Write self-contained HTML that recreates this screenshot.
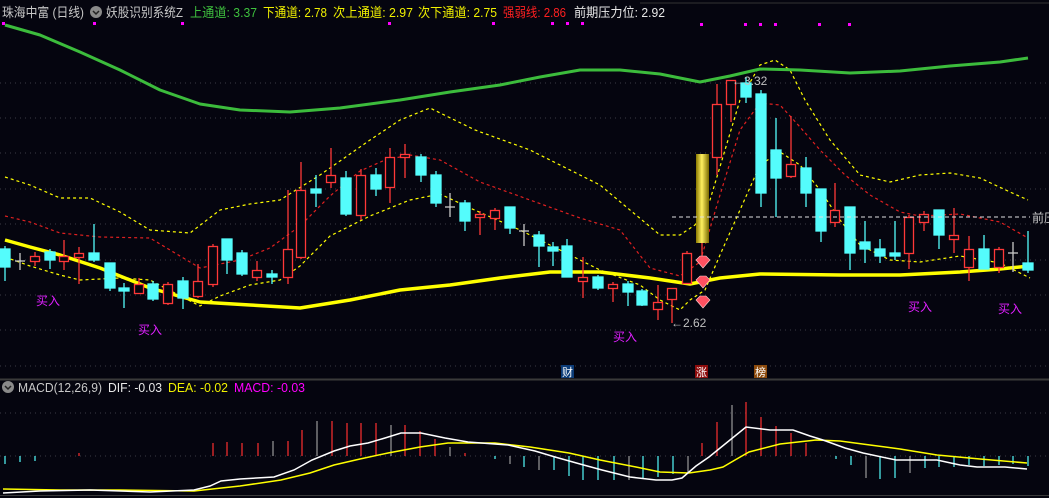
<!DOCTYPE html>
<html><head><meta charset="utf-8"><style>
html,body{margin:0;padding:0;background:#05050f;}
body{width:1049px;height:498px;overflow:hidden;position:relative;font-family:"Liberation Sans","Noto Sans CJK SC",sans-serif;}
svg{position:absolute;left:0;top:0;}
</style></head><body>
<svg width="1049" height="498" viewBox="0 0 1049 498" xmlns="http://www.w3.org/2000/svg" font-family="Liberation Sans, Noto Sans CJK SC, sans-serif">
<rect width="1049" height="498" fill="#05050f"/>
<line x1="640" y1="3" x2="1049" y2="3" stroke="#333" stroke-width="1"/>
<!-- grid -->
<g stroke="#3a3a44" stroke-width="1" stroke-dasharray="1,4">
<line x1="0" y1="83" x2="1049" y2="83"/><line x1="0" y1="118" x2="1049" y2="118"/><line x1="0" y1="153" x2="1049" y2="153"/><line x1="0" y1="189" x2="1049" y2="189"/><line x1="0" y1="224" x2="1049" y2="224"/><line x1="0" y1="260" x2="1049" y2="260"/><line x1="0" y1="295" x2="1049" y2="295"/><line x1="0" y1="330" x2="1049" y2="330"/><line x1="0" y1="366" x2="1049" y2="366"/>
<line x1="0" y1="413" x2="1049" y2="413"/><line x1="0" y1="456" x2="1049" y2="456"/>
</g>
<line x1="0" y1="379.5" x2="1049" y2="379.5" stroke="#3a3a3a" stroke-width="2"/>
<line x1="0" y1="495.5" x2="1049" y2="495.5" stroke="#3a3a3a" stroke-width="1"/>
<!-- header -->
<g font-size="13" lengthAdjust="spacingAndGlyphs">
<text x="2" y="17" fill="#c8c8c8" textLength="82" lengthAdjust="spacingAndGlyphs">珠海中富 (日线)</text>
<text x="106" y="17" fill="#c8c8c8" textLength="77" lengthAdjust="spacingAndGlyphs">妖股识别系统Z</text>
<text x="190" y="17" fill="#3ec03e" textLength="67" lengthAdjust="spacingAndGlyphs">上通道: 3.37</text>
<text x="263" y="17" fill="#f0f000" textLength="64" lengthAdjust="spacingAndGlyphs">下通道: 2.78</text>
<text x="333" y="17" fill="#f0f000" textLength="80" lengthAdjust="spacingAndGlyphs">次上通道: 2.97</text>
<text x="418" y="17" fill="#f0f000" textLength="79" lengthAdjust="spacingAndGlyphs">次下通道: 2.75</text>
<text x="503" y="17" fill="#ff2020" textLength="63" lengthAdjust="spacingAndGlyphs">强弱线: 2.86</text>
<text x="574" y="17" fill="#e8e8e8" textLength="91" lengthAdjust="spacingAndGlyphs">前期压力位: 2.92</text>
</g>
<circle cx="96" cy="12" r="6" fill="#8a8a8a"/><path d="M93 11 L96 14 L99 11" stroke="#222" stroke-width="1.5" fill="none"/>
<g fill="#ff00ff">
<rect x="2" y="22" width="3" height="3"/><rect x="93" y="22" width="3" height="3"/><rect x="181" y="22" width="3" height="3"/><rect x="388" y="22" width="3" height="3"/><rect x="492" y="22" width="3" height="3"/><rect x="551" y="22" width="3" height="3"/><rect x="566" y="22" width="3" height="3"/><rect x="581" y="22" width="3" height="3"/>
<rect x="700" y="23" width="3" height="3"/><rect x="744" y="23" width="3" height="3"/><rect x="759" y="23" width="3" height="3"/><rect x="774" y="23" width="3" height="3"/><rect x="818" y="23" width="3" height="3"/><rect x="848" y="23" width="3" height="3"/>
</g>
<!-- bands -->
<polyline fill="none" stroke="#ffff00" stroke-width="1.2" stroke-dasharray="3,3" points="5,177 30,185 60,198 90,198 120,212 150,230 190,233 220,210 250,204 280,200 320,175 370,140 400,120 430,108 475,130 530,150 600,185 660,235 680,235 695,225 710,200 725,150 740,100 760,65 775,60 790,70 805,100 830,140 860,175 890,182 920,175 950,173 980,178 1010,192 1028,200"/>
<polyline fill="none" stroke="#e02020" stroke-width="1.2" stroke-dasharray="3,3" points="5,216 30,222 60,233 100,237 150,238 170,250 200,268 240,260 270,248 300,226 330,196 360,171 385,160 410,155 440,160 480,182 530,200 580,218 620,230 650,268 680,276 700,262 720,195 740,130 760,103 780,105 800,127 820,150 845,175 870,195 900,212 920,216 960,214 1000,222 1028,238"/>
<polyline fill="none" stroke="#ffff00" stroke-width="1.2" stroke-dasharray="3,3" points="5,257 30,266 60,275 80,280 120,278 150,280 165,288 200,306 220,296 250,285 280,280 300,266 330,236 370,216 410,200 440,194 470,208 520,230 560,250 600,270 640,285 660,300 680,310 690,300 705,290 720,255 740,210 760,165 780,152 800,165 820,190 840,220 860,245 890,260 920,262 960,256 1000,263 1030,278"/>
<polyline fill="none" stroke="#3cbc3c" stroke-width="3" stroke-linejoin="round" points="5,25 40,35 80,52 120,70 160,90 200,104 240,110 290,112 340,108 400,100 450,92 500,85 540,77 580,70 620,70 660,74 700,82 730,76 760,69 800,70 850,73 900,71 950,66 1000,62 1028,58"/>
<polyline fill="none" stroke="#ffff00" stroke-width="3.5" stroke-linejoin="round" points="5,240 30,247 60,255 100,268 150,288 200,302 250,305 300,308 350,300 400,290 450,285 500,278 550,272 600,272 650,278 690,284 720,278 760,274 840,275 900,275 960,272 1000,269 1030,266"/>
<!-- candles -->
<g stroke-width="1.3">
<g stroke="#54fcfc" fill="#54fcfc">
<line x1="5" y1="246" x2="5" y2="281"/><rect x="0" y="249" width="10" height="18"/>
<line x1="50" y1="249" x2="50" y2="269"/><rect x="45" y="252" width="10" height="8"/>
<line x1="94" y1="224" x2="94" y2="262"/><rect x="89" y="253" width="10" height="7"/>
<line x1="110" y1="263" x2="110" y2="291"/><rect x="105" y="263" width="10" height="25"/>
<line x1="124" y1="283" x2="124" y2="308"/><rect x="119" y="288" width="10" height="3"/>
<line x1="153" y1="281" x2="153" y2="301"/><rect x="148" y="284" width="10" height="15"/>
<line x1="183" y1="277" x2="183" y2="309"/><rect x="178" y="281" width="10" height="17"/>
<line x1="227" y1="239" x2="227" y2="274"/><rect x="222" y="239" width="10" height="21"/>
<line x1="242" y1="250" x2="242" y2="276"/><rect x="237" y="253" width="10" height="21"/>
<line x1="272" y1="270" x2="272" y2="284"/><rect x="267" y="274" width="10" height="3"/>
<line x1="316" y1="175" x2="316" y2="207"/><rect x="311" y="189" width="10" height="4"/>
<line x1="346" y1="171" x2="346" y2="216"/><rect x="341" y="178" width="10" height="36"/>
<line x1="376" y1="168" x2="376" y2="196"/><rect x="371" y="175" width="10" height="14"/>
<line x1="421" y1="154" x2="421" y2="182"/><rect x="416" y="157" width="10" height="18"/>
<line x1="436" y1="171" x2="436" y2="207"/><rect x="431" y="175" width="10" height="28"/>
<line x1="465" y1="200" x2="465" y2="231"/><rect x="460" y="203" width="10" height="18"/>
<line x1="510" y1="207" x2="510" y2="234"/><rect x="505" y="207" width="10" height="21"/>
<line x1="539" y1="231" x2="539" y2="267"/><rect x="534" y="235" width="10" height="11"/>
<line x1="553" y1="242" x2="553" y2="266"/><rect x="548" y="247" width="10" height="4"/>
<line x1="567" y1="239" x2="567" y2="277"/><rect x="562" y="246" width="10" height="31"/>
<line x1="598" y1="275" x2="598" y2="290"/><rect x="593" y="277" width="10" height="11"/>
<line x1="628" y1="281" x2="628" y2="306"/><rect x="623" y="284" width="10" height="8"/>
<line x1="642" y1="289" x2="642" y2="306"/><rect x="637" y="291" width="10" height="14"/>
<line x1="746" y1="77" x2="746" y2="103"/><rect x="741" y="83" width="10" height="14"/>
<line x1="761" y1="90" x2="761" y2="207"/><rect x="756" y="94" width="10" height="99"/>
<line x1="776" y1="118" x2="776" y2="217"/><rect x="771" y="150" width="10" height="28"/>
<line x1="806" y1="157" x2="806" y2="207"/><rect x="801" y="168" width="10" height="25"/>
<line x1="821" y1="189" x2="821" y2="242"/><rect x="816" y="189" width="10" height="42"/>
<line x1="850" y1="207" x2="850" y2="270"/><rect x="845" y="207" width="10" height="46"/>
<line x1="865" y1="221" x2="865" y2="263"/><rect x="860" y="242" width="10" height="7"/>
<line x1="880" y1="239" x2="880" y2="263"/><rect x="875" y="249" width="10" height="7"/>
<line x1="895" y1="221" x2="895" y2="260"/><rect x="890" y="253" width="10" height="3"/>
<line x1="939" y1="210" x2="939" y2="249"/><rect x="934" y="210" width="10" height="25"/>
<line x1="984" y1="235" x2="984" y2="269"/><rect x="979" y="249" width="10" height="20"/>
<line x1="1028" y1="231" x2="1028" y2="273"/><rect x="1023" y="263" width="10" height="7"/>
</g>
<g stroke="#ff3838" fill="#05050f">
<line x1="35" y1="252" x2="35" y2="266"/><rect x="30.5" y="256.5" width="9" height="5"/>
<line x1="64" y1="240" x2="64" y2="270"/><rect x="59.5" y="256.5" width="9" height="5"/>
<line x1="79" y1="247" x2="79" y2="284"/><rect x="74.5" y="253.5" width="9" height="4"/>
<line x1="139" y1="278" x2="139" y2="294"/><rect x="134.5" y="284.5" width="9" height="9"/>
<line x1="168" y1="282" x2="168" y2="305"/><rect x="163.5" y="284.5" width="9" height="19"/>
<line x1="198" y1="264" x2="198" y2="298"/><rect x="193.5" y="281.5" width="9" height="15"/>
<line x1="213" y1="244" x2="213" y2="287"/><rect x="208.5" y="246.5" width="9" height="38"/>
<line x1="257" y1="261" x2="257" y2="281"/><rect x="252.5" y="270.5" width="9" height="7"/>
<line x1="288" y1="190" x2="288" y2="284"/><rect x="283.5" y="249.5" width="9" height="28"/>
<line x1="301" y1="162" x2="301" y2="259"/><rect x="296.5" y="190.5" width="9" height="67"/>
<line x1="331" y1="148" x2="331" y2="188"/><rect x="326.5" y="175.5" width="9" height="7"/>
<line x1="361" y1="169" x2="361" y2="220"/><rect x="356.5" y="175.5" width="9" height="40"/>
<line x1="390" y1="148" x2="390" y2="203"/><rect x="385.5" y="157.5" width="9" height="30"/>
<line x1="405" y1="144" x2="405" y2="178"/><rect x="400.5" y="154.5" width="9" height="3"/>
<line x1="480" y1="211" x2="480" y2="235"/><rect x="475.5" y="214.5" width="9" height="3"/>
<line x1="495" y1="208" x2="495" y2="230"/><rect x="490.5" y="210.5" width="9" height="8"/>
<line x1="583" y1="257" x2="583" y2="298"/><rect x="578.5" y="277.5" width="9" height="4"/>
<line x1="613" y1="282" x2="613" y2="302"/><rect x="608.5" y="284.5" width="9" height="4"/>
<line x1="658" y1="285" x2="658" y2="320"/><rect x="653.5" y="302.5" width="9" height="7"/>
<line x1="672" y1="288" x2="672" y2="323"/><rect x="667.5" y="288.5" width="9" height="11"/>
<line x1="687" y1="251" x2="687" y2="283"/><rect x="682.5" y="253.5" width="9" height="30"/>
<line x1="702" y1="243" x2="702" y2="260"/>
<line x1="717" y1="84" x2="717" y2="175"/><rect x="712.5" y="104.5" width="9" height="53"/>
<line x1="731" y1="80" x2="731" y2="122"/><rect x="726.5" y="80.5" width="9" height="24"/>
<line x1="791" y1="116" x2="791" y2="178"/><rect x="786.5" y="164.5" width="9" height="12"/>
<line x1="835" y1="183" x2="835" y2="227"/><rect x="830.5" y="210.5" width="9" height="12"/>
<line x1="909" y1="215" x2="909" y2="269"/><rect x="904.5" y="217.5" width="9" height="36"/>
<line x1="924" y1="211" x2="924" y2="231"/><rect x="919.5" y="214.5" width="9" height="8"/>
<line x1="954" y1="208" x2="954" y2="253"/><rect x="949.5" y="235.5" width="9" height="4"/>
<line x1="969" y1="236" x2="969" y2="281"/><rect x="964.5" y="249.5" width="9" height="18"/>
<line x1="999" y1="247" x2="999" y2="273"/><rect x="994.5" y="249.5" width="9" height="18"/>
</g>
<g stroke="#c8c8c8">
<line x1="20" y1="253" x2="20" y2="270"/><line x1="15" y1="261" x2="25" y2="261"/>
<line x1="450" y1="193" x2="450" y2="217"/><line x1="445" y1="207" x2="455" y2="207"/>
<line x1="524" y1="224" x2="524" y2="246"/><line x1="519" y1="231" x2="529" y2="231"/>
<line x1="1013" y1="242" x2="1013" y2="272"/><line x1="1008" y1="253" x2="1018" y2="253"/>
</g>
</g>
<!-- gold bar -->
<defs><linearGradient id="gb" x1="0" x2="1"><stop offset="0" stop-color="#8a7a00"/><stop offset="0.45" stop-color="#fff060"/><stop offset="1" stop-color="#7a6a00"/></linearGradient></defs>
<rect x="696" y="154" width="13" height="89" fill="url(#gb)"/>
<!-- dashed pressure line -->
<line x1="672" y1="217" x2="1030" y2="217" stroke="#e0e0e0" stroke-width="1" stroke-dasharray="4,3"/>
<text x="1032" y="222" font-size="12" fill="#c8c8c8">前压</text>
<!-- diamonds -->
<g fill="#ff5060" stroke="#ffd0d0" stroke-width="0.6">
<path d="M696 260 L700 256 L706 256 L710 260 L703 268 Z"/>
<path d="M696 280 L700 276 L706 276 L710 280 L703 288 Z"/>
<path d="M696 300 L700 296 L706 296 L710 300 L703 308 Z"/>
</g>
<text x="732" y="85" font-size="12" fill="#c0c0c0">←3.32</text>
<text x="671" y="327" font-size="12" fill="#c0c0c0">←2.62</text>
<g font-size="12" fill="#e020ff">
<text x="36" y="305">买入</text><text x="138" y="334">买入</text><text x="613" y="341">买入</text><text x="908" y="311">买入</text><text x="998" y="313">买入</text>
</g>
<rect x="561" y="365" width="13" height="13" fill="#0c3c78"/><text x="562" y="376" font-size="11" fill="#fff">财</text>
<rect x="695" y="365" width="13" height="13" fill="#8c0c0c"/><text x="696" y="376" font-size="11" fill="#fff">涨</text>
<rect x="754" y="365" width="13" height="13" fill="#8c4a0c"/><text x="755" y="376" font-size="11" fill="#fff">榜</text>
<!-- MACD header -->
<circle cx="8" cy="387" r="6" fill="#8a8a8a"/><path d="M5 386 L8 389 L11 386" stroke="#222" stroke-width="1.5" fill="none"/>
<text x="18" y="392" font-size="13" fill="#c8c8c8" textLength="84" lengthAdjust="spacingAndGlyphs">MACD(12,26,9)</text>
<text x="108" y="392" font-size="13" fill="#e8e8e8" textLength="54" lengthAdjust="spacingAndGlyphs">DIF: -0.03</text>
<text x="168" y="392" font-size="13" fill="#f0f000" textLength="60" lengthAdjust="spacingAndGlyphs">DEA: -0.02</text>
<text x="234" y="392" font-size="13" fill="#ff00ff" textLength="71" lengthAdjust="spacingAndGlyphs">MACD: -0.03</text>
<!-- histogram -->
<g stroke-width="1.2">
<g stroke="#54fcfc">
<line x1="5" y1="456" x2="5" y2="464"/><line x1="20" y1="456" x2="20" y2="462"/><line x1="35" y1="456" x2="35" y2="461"/>
<line x1="495" y1="456" x2="495" y2="459"/><line x1="524" y1="456" x2="524" y2="467"/><line x1="554" y1="456" x2="554" y2="470"/><line x1="569" y1="456" x2="569" y2="476"/><line x1="583" y1="456" x2="583" y2="480"/><line x1="598" y1="456" x2="598" y2="480"/><line x1="614" y1="456" x2="614" y2="480"/><line x1="643" y1="456" x2="643" y2="478"/><line x1="658" y1="456" x2="658" y2="477"/><line x1="673" y1="456" x2="673" y2="474"/>
<line x1="836" y1="456" x2="836" y2="459"/><line x1="851" y1="456" x2="851" y2="465"/><line x1="880" y1="456" x2="880" y2="479"/><line x1="895" y1="456" x2="895" y2="478"/><line x1="925" y1="456" x2="925" y2="468"/><line x1="939" y1="456" x2="939" y2="467"/><line x1="954" y1="456" x2="954" y2="467"/><line x1="969" y1="456" x2="969" y2="465"/><line x1="984" y1="456" x2="984" y2="466"/><line x1="999" y1="456" x2="999" y2="465"/><line x1="1013" y1="456" x2="1013" y2="464"/><line x1="1028" y1="456" x2="1028" y2="466"/>
</g>
<g stroke="#9a9a9a">
<line x1="510" y1="456" x2="510" y2="464"/><line x1="539" y1="456" x2="539" y2="470"/><line x1="629" y1="456" x2="629" y2="480"/><line x1="688" y1="456" x2="688" y2="472"/>
<line x1="866" y1="456" x2="866" y2="478"/><line x1="910" y1="456" x2="910" y2="473"/>
<line x1="273" y1="456" x2="273" y2="441"/><line x1="317" y1="456" x2="317" y2="421"/><line x1="391" y1="456" x2="391" y2="425"/><line x1="450" y1="456" x2="450" y2="447"/><line x1="732" y1="456" x2="732" y2="405"/>
</g>
<g stroke="#ff3030">
<line x1="79" y1="456" x2="79" y2="453"/>
<line x1="213" y1="456" x2="213" y2="443"/><line x1="227" y1="456" x2="227" y2="442"/><line x1="242" y1="456" x2="242" y2="443"/><line x1="258" y1="456" x2="258" y2="443"/><line x1="288" y1="456" x2="288" y2="441"/><line x1="302" y1="456" x2="302" y2="430"/><line x1="332" y1="456" x2="332" y2="421"/><line x1="347" y1="456" x2="347" y2="423"/><line x1="361" y1="456" x2="361" y2="423"/><line x1="376" y1="456" x2="376" y2="423"/><line x1="405" y1="456" x2="405" y2="425"/><line x1="420" y1="456" x2="420" y2="431"/><line x1="435" y1="456" x2="435" y2="439"/><line x1="465" y1="456" x2="465" y2="453"/>
<line x1="702" y1="456" x2="702" y2="443"/><line x1="717" y1="456" x2="717" y2="422"/><line x1="746" y1="456" x2="746" y2="402"/><line x1="761" y1="456" x2="761" y2="417"/><line x1="776" y1="456" x2="776" y2="426"/><line x1="791" y1="456" x2="791" y2="433"/><line x1="806" y1="456" x2="806" y2="443"/>
</g>
</g>
<polyline fill="none" stroke="#ffff00" stroke-width="1.5" points="3,489 60,490 120,490 194,491 240,486 281,480 310,473 334,465 360,459 388,453 420,447 448,443 495,443 530,447 569,453 600,460 636,467 660,472 689,473 710,470 723,467 735,460 749,452 780,444 816,440 840,441 870,445 900,449 937,455 980,459 1027,463"/>
<polyline fill="none" stroke="#ffffff" stroke-width="1.5" points="3,493 40,491 90,490 150,492 194,490 210,486 221,481 240,479 274,477 294,470 312,460 334,451 350,446 368,443 385,438 401,433 421,433 445,438 468,442 508,445 535,451 555,457 580,464 602,470 630,477 656,480 672,480 682,478 696,466 709,457 730,440 746,427 770,430 793,430 810,436 823,440 845,448 863,453 896,460 937,460 960,465 977,467 1005,467 1027,469"/>
</svg>
</body></html>
